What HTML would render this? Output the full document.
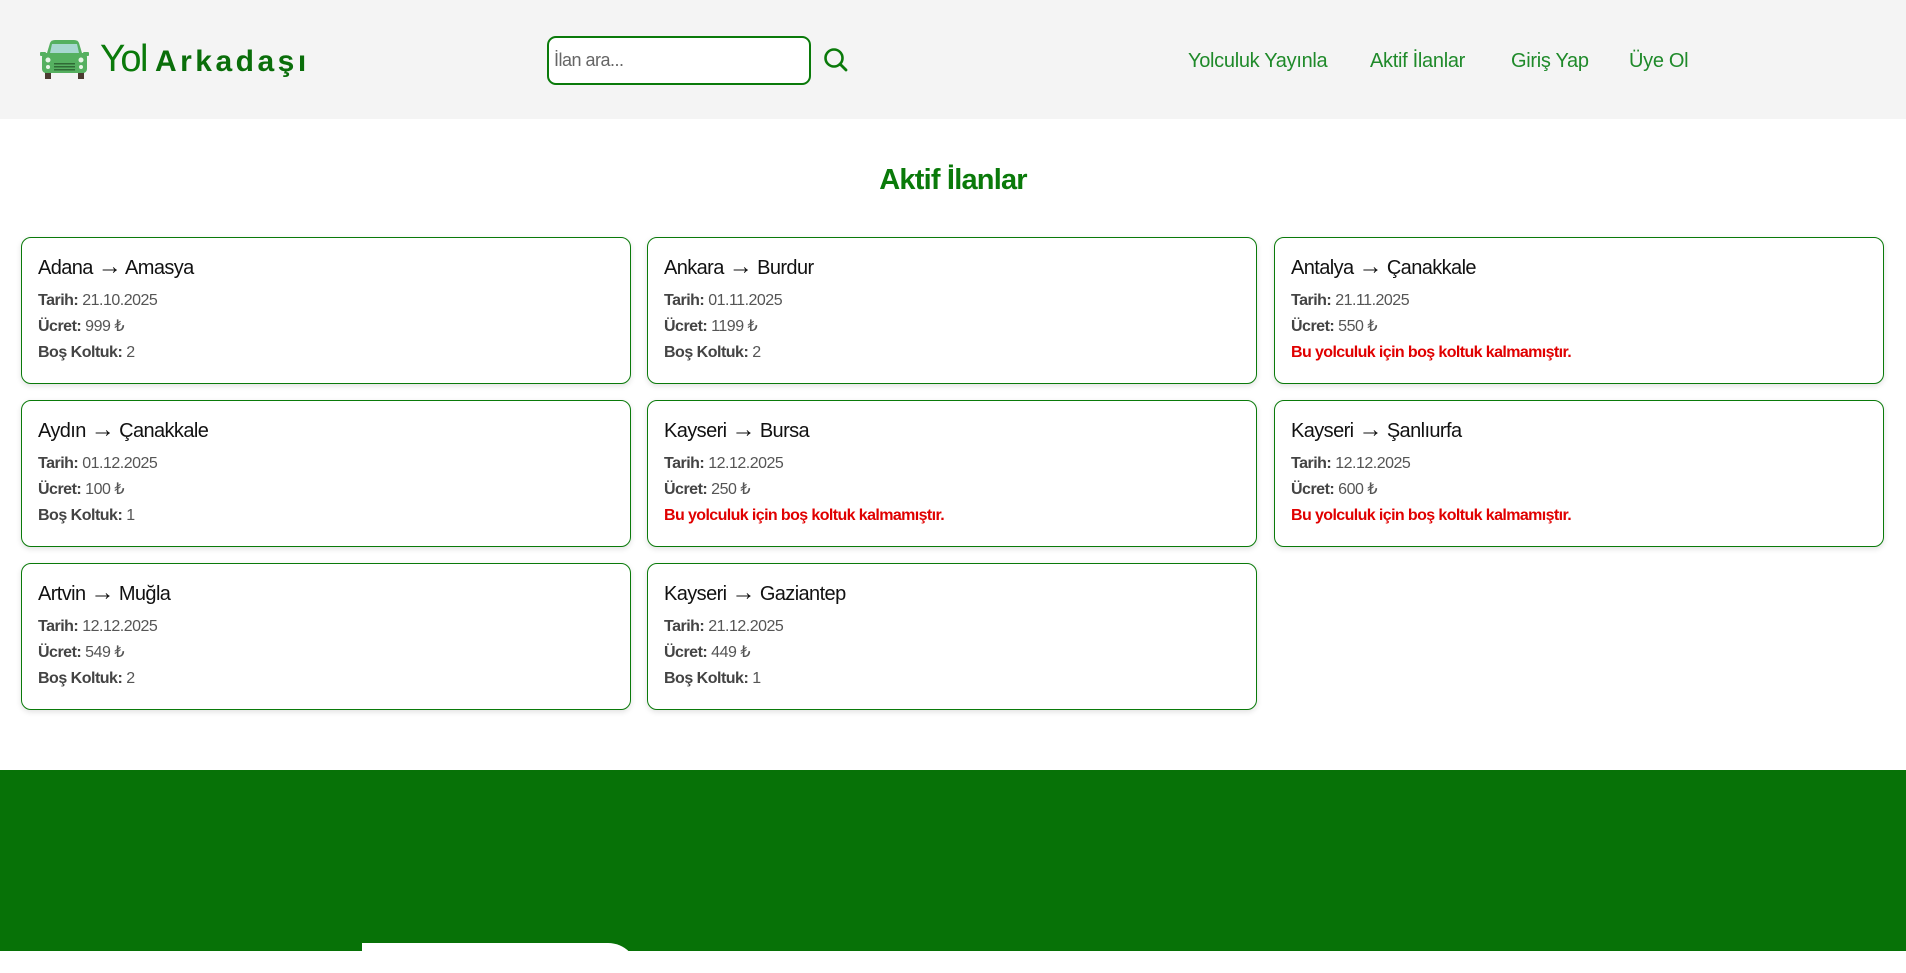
<!DOCTYPE html>
<html><head><meta charset="utf-8">
<style>
*{box-sizing:border-box;margin:0;padding:0}
html,body{width:1906px;height:951px;overflow:hidden;background:#fff;font-family:"Liberation Sans",sans-serif}
header{position:absolute;left:0;top:0;width:1906px;height:119px;background:#f4f4f4}
.logo{position:absolute;left:100px;top:38px;color:#0a7a0a;white-space:nowrap}
.logo .y{font-size:38px;letter-spacing:-1.5px}
.logo .a{font-size:30px;letter-spacing:3.5px;margin-left:8px;font-weight:bold;color:#0a6e0a}
.search{position:absolute;left:547px;top:36px;width:264px;height:49px;border:2px solid #0a7a0a;border-radius:9px;background:#fff;font-size:18px;color:#666;padding:12px 5px;letter-spacing:-0.5px}
nav a{position:absolute;top:50px;font-size:20px;color:#1f8a2a;letter-spacing:-0.3px;text-decoration:none}
h1{position:absolute;left:0;width:1906px;top:164px;text-align:center;font-size:29px;font-weight:bold;color:#0a7a0a;letter-spacing:-0.8px}
.card{position:absolute;width:610px;height:147px;border:1.5px solid #0a7a0a;border-radius:10px;box-shadow:0 2px 6px rgba(0,0,0,.12);padding:18px 16px;background:#fff}
.card h3{font-size:20px;font-weight:normal;color:#111;letter-spacing:-0.6px;margin-bottom:8px;line-height:24px}
.card h3 i{font-style:normal;font-size:24px;line-height:20px}
.card p{font-size:16px;color:#555;line-height:26px;letter-spacing:-0.5px}
.card b{color:#444}
.card .r{color:#e00000;letter-spacing:-0.6px;font-weight:bold}
footer{position:absolute;left:0;top:770px;width:1906px;height:181px;background:#077207}
.wh{position:absolute;left:362px;top:943px;width:276px;height:30px;background:#fff;border-radius:0 40px 0 0}
</style></head><body>
<header>
<svg style="position:absolute;left:40px;top:40px" width="49" height="40" viewBox="0 0 49 40">
<rect x="5" y="30" width="6" height="9" fill="#4a3a30"/><rect x="38" y="30" width="6" height="9" fill="#4a3a30"/>
<path d="M10 3 Q11 0 15 0 H34 Q38 0 39 3 L42 13 H7 Z" fill="#55b060"/>
<path d="M12 4 H37 L39 13 H10 Z" fill="#a8d8d0"/>
<rect x="0" y="12" width="6" height="4" rx="1" fill="#55b060"/><rect x="43" y="12" width="6" height="4" rx="1" fill="#55b060"/>
<rect x="2" y="13" width="45" height="20" rx="4" fill="#55b060"/>
<circle cx="8" cy="20" r="2.5" fill="#e8f5e8"/><circle cx="41" cy="20" r="2.5" fill="#e8f5e8"/>
<circle cx="8" cy="27" r="2" fill="#e8f5e8"/><circle cx="41" cy="27" r="2" fill="#e8f5e8"/>
<rect x="14" y="23" width="21" height="1.5" fill="#2f6a35"/><rect x="14" y="26" width="21" height="1.5" fill="#2f6a35"/><rect x="14" y="29" width="21" height="1.5" fill="#2f6a35"/>
</svg>
<div class="logo"><span class="y">Yol</span><span class="a">Arkadaşı</span></div>
<div class="search">İlan ara...</div>
<svg style="position:absolute;left:823px;top:47px" width="26" height="26" viewBox="0 0 26 26"><circle cx="11" cy="11" r="8.5" fill="none" stroke="#0a7a0a" stroke-width="2.6"/><path d="M17 17 L23 23" stroke="#0a7a0a" stroke-width="2.8" stroke-linecap="round"/></svg>
<nav><a style="left:1188px">Yolculuk Yayınla</a><a style="left:1370px">Aktif İlanlar</a><a style="left:1511px">Giriş Yap</a><a style="left:1629px">Üye Ol</a></nav>
</header>
<h1>Aktif İlanlar</h1>

<div class="card" style="left:21px;top:237px"><h3>Adana <i>→</i> Amasya</h3><p><b>Tarih:</b> 21.10.2025</p><p><b>Ücret:</b> 999 ₺</p><p><b>Boş Koltuk:</b> 2</p></div>
<div class="card" style="left:647px;top:237px"><h3>Ankara <i>→</i> Burdur</h3><p><b>Tarih:</b> 01.11.2025</p><p><b>Ücret:</b> 1199 ₺</p><p><b>Boş Koltuk:</b> 2</p></div>
<div class="card" style="left:1274px;top:237px"><h3>Antalya <i>→</i> Çanakkale</h3><p><b>Tarih:</b> 21.11.2025</p><p><b>Ücret:</b> 550 ₺</p><p class="r">Bu yolculuk için boş koltuk kalmamıştır.</p></div>

<div class="card" style="left:21px;top:400px"><h3>Aydın <i>→</i> Çanakkale</h3><p><b>Tarih:</b> 01.12.2025</p><p><b>Ücret:</b> 100 ₺</p><p><b>Boş Koltuk:</b> 1</p></div>
<div class="card" style="left:647px;top:400px"><h3>Kayseri <i>→</i> Bursa</h3><p><b>Tarih:</b> 12.12.2025</p><p><b>Ücret:</b> 250 ₺</p><p class="r">Bu yolculuk için boş koltuk kalmamıştır.</p></div>
<div class="card" style="left:1274px;top:400px"><h3>Kayseri <i>→</i> Şanlıurfa</h3><p><b>Tarih:</b> 12.12.2025</p><p><b>Ücret:</b> 600 ₺</p><p class="r">Bu yolculuk için boş koltuk kalmamıştır.</p></div>

<div class="card" style="left:21px;top:563px"><h3>Artvin <i>→</i> Muğla</h3><p><b>Tarih:</b> 12.12.2025</p><p><b>Ücret:</b> 549 ₺</p><p><b>Boş Koltuk:</b> 2</p></div>
<div class="card" style="left:647px;top:563px"><h3>Kayseri <i>→</i> Gaziantep</h3><p><b>Tarih:</b> 21.12.2025</p><p><b>Ücret:</b> 449 ₺</p><p><b>Boş Koltuk:</b> 1</p></div>

<footer></footer>
<div class="wh"></div>
</body></html>
